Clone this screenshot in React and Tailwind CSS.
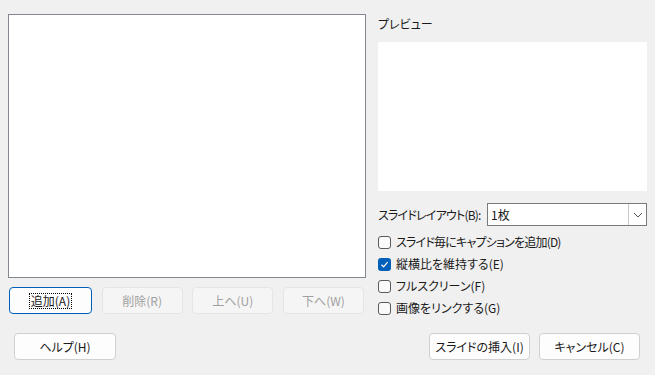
import React from "react";

function Btn({ children, w, disabled, focused }) {
  const base =
    "h-[27px] flex items-center justify-center rounded-[4px] border text-[12px] whitespace-nowrap";
  let cls;
  if (disabled) cls = " bg-[#f5f5f5] border-[#e5e5e5] text-[#a0a0a0]";
  else if (focused) cls = " bg-[#fdfdfd] border-[#005fb8] text-[#1a1a1a]";
  else cls = " bg-[#fdfdfd] border-[#d0d0d0] text-[#1a1a1a]";
  return (
    <div className={base + cls} style={{ width: w }}>
      {focused ? (
        <span className="border border-dotted border-black px-[1px] leading-[14px]">{children}</span>
      ) : (
        children
      )}
    </div>
  );
}

function Check({ checked, label, tight }) {
  return (
    <div className="h-[22px] flex items-center">
      {checked ? (
        <div className="w-[13px] h-[13px] rounded-[3px] bg-[#005fb8] flex items-center justify-center">
          <svg width="9" height="9" viewBox="0 0 9 9">
            <path d="M1.5 4.8 L3.6 6.8 L7.6 2.2" fill="none" stroke="white" strokeWidth="1.2" />
          </svg>
        </div>
      ) : (
        <div className="w-[13px] h-[13px] rounded-[3px] border border-[#5a5a5a] bg-[#fafafa]" />
      )}
      <span
        className={
          tight
            ? "ml-[5px] text-[12px] text-[#1a1a1a] whitespace-nowrap tracking-[-0.8px]"
            : "ml-[5px] text-[12px] text-[#1a1a1a] whitespace-nowrap"
        }
      >
        {label}
      </span>
    </div>
  );
}

export default function App() {
  return (
    <div
      className="w-[655px] h-[375px] bg-[#f0f0f0] flex flex-col [font-feature-settings:'palt'] text-[#1a1a1a]"
      style={{ fontFamily: '"Noto Sans CJK JP", "Noto Sans", sans-serif' }}
    >
      <div className="h-[333px] pt-[14px] pl-[8px] flex">
        <div className="w-[358px] flex flex-col">
          <div className="h-[264px] bg-white border border-[#828790]" />
          <div className="mt-[9px] pl-[1px] pr-[2px] flex justify-between">
            <Btn w={83} focused>追加(A)</Btn>
            <Btn w={81} disabled>削除(R)</Btn>
            <Btn w={81} disabled>上へ(U)</Btn>
            <Btn w={81} disabled>下へ(W)</Btn>
          </div>
        </div>
        <div className="ml-[12px] w-[269px] flex flex-col">
          <div className="h-[28px] text-[12px] leading-[20px]">プレビュー</div>
          <div className="h-[149px] bg-white" />
          <div className="mt-[12px] h-[23px] flex items-center">
            <div className="w-[109px] shrink-0 text-[12px] whitespace-nowrap tracking-[-0.8px]">スライドレイアウト(B):</div>
            <div className="w-[160px] shrink-0 h-[23px] bg-white border border-[#7a7a7a] flex items-center">
              <span className="pl-[3px] text-[12px] flex-1">1枚</span>
              <div className="w-[18px] h-[21px] border-l border-[#c8c8c8] flex items-center justify-center bg-white">
                <svg width="10" height="6" viewBox="0 0 10 6">
                  <path d="M1 1 L5 5 L9 1" fill="none" stroke="#555" strokeWidth="1" />
                </svg>
              </div>
            </div>
          </div>
          <div className="mt-[5px] flex flex-col">
            <Check tight label="スライド毎にキャプションを追加(D)" />
            <Check checked label="縦横比を維持する(E)" />
            <Check label="フルスクリーン(F)" />
            <Check label="画像をリンクする(G)" />
          </div>
        </div>
      </div>
      <div className="flex pl-[14px] pr-[15px]">
        <Btn w={102}>ヘルプ(H)</Btn>
        <div className="ml-auto flex gap-[9px]">
          <Btn w={101}>スライドの挿入(I)</Btn>
          <Btn w={101}>キャンセル(C)</Btn>
        </div>
      </div>
    </div>
  );
}
